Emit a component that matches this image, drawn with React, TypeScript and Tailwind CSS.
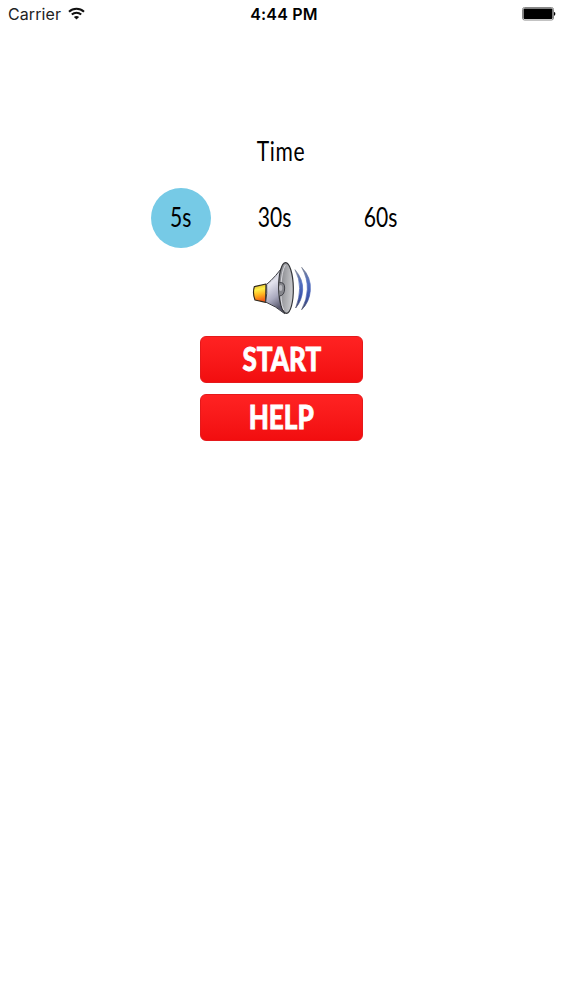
import React, { useState } from 'react';

const durations = [
    { seconds: 5, spacing: '' },
    { seconds: 30, spacing: 'ml-[34px]' },
    { seconds: 60, spacing: 'ml-[46px]' },
];

const WifiIcon: React.FC = () => (
    <svg className="w-[17px] h-[13px] ml-[7px] -mt-0.5" viewBox="0 0 17 13" fill="none" stroke="#111" strokeWidth="2">
        <path d="M1 4.7C5.2.7 11.8.7 16 4.7" />
        <path d="M3.8 7.6c2.7-2.5 6.700-2.500 9.400 0" />
        <path d="M8.500 12.500 5.900 9.900c1.500-1.300 3.700-1.300 5.200 0z" fill="#111" stroke="none" />
    </svg>
);

const BatteryIcon: React.FC = () => (
    <svg className="w-[34px] h-[14px]" viewBox="0 0 34 14">
        <rect x="0.500" y="0.500" width="31" height="12.500" rx="2" fill="#fff" stroke="#888" />
        <rect x="1.500" y="1.500" width="29" height="10.500" rx="1" fill="#000" />
        <path d="M32 5c1 .2 1.300.8 1.300 1.800s-.3 1.700-1.300 1.900z" fill="#000" />
    </svg>
);

const SpeakerIcon: React.FC = () => (
    <svg className="w-[84px] h-[72px]" viewBox="0 0 252 216">
        <defs>
            <linearGradient id="magnet" x1="0" y1="0" x2="0.15" y2="1">
                <stop offset="0" stopColor="#d9a927" />
                <stop offset="0.35" stopColor="#fff04a" />
                <stop offset="0.65" stopColor="#ffb31f" />
                <stop offset="1" stopColor="#ee5a16" />
            </linearGradient>
            <linearGradient id="horn" x1="0" y1="0" x2="0.3" y2="1">
                <stop offset="0" stopColor="#8a8b92" />
                <stop offset="0.45" stopColor="#e4e4ef" />
                <stop offset="0.75" stopColor="#a9a9be" />
                <stop offset="1" stopColor="#55556a" />
            </linearGradient>
            <linearGradient id="cone" x1="0" y1="0" x2="1" y2="0.3">
                <stop offset="0" stopColor="#77787d" />
                <stop offset="0.55" stopColor="#a5a6aa" />
                <stop offset="1" stopColor="#c8c9cc" />
            </linearGradient>
            <linearGradient id="wave" x1="0" y1="0" x2="0" y2="1">
                <stop offset="0" stopColor="#777d8d" />
                <stop offset="0.35" stopColor="#526fc0" />
                <stop offset="0.7" stopColor="#3c54ac" />
                <stop offset="1" stopColor="#444a62" />
            </linearGradient>
        </defs>
        <path d="M43 104 78 96 77 151 45 144Q37 124 43 104Z" fill="url(#magnet)" stroke="#30281b" strokeWidth="3.500" strokeLinejoin="round" />
        <path d="M80 97Q105 77 137 32L134 185Q108 163 77 150Q82 124 80 97Z" fill="url(#horn)" stroke="#3c3d43" strokeWidth="3" strokeLinejoin="round" />
        <ellipse cx="138" cy="108" rx="22" ry="76" fill="url(#cone)" stroke="#333438" strokeWidth="3.500" transform="rotate(-1 138 108)" />
        <path d="M136 39C121 61 117 146 131 174" fill="none" stroke="#d9d9df" strokeWidth="3" />
        <path d="M118 92Q134 89 134 108Q134 131 118 132Z" fill="#85868c" />
        <path d="M118 92Q134 89 134 108Q134 131 118 132" fill="none" stroke="#404148" strokeWidth="3" />
        <ellipse cx="122" cy="108" rx="5" ry="9" fill="#b8b8be" />
        <path d="M165 53Q190 82 188 114Q186 146 167 168Q179 137 179 109Q179 80 165 53Z" fill="url(#wave)" stroke="url(#wave)" strokeWidth="2" />
        <path d="M185 46Q215 77 211 116Q208 151 185 173Q201 143 202 112Q203 79 185 46Z" fill="url(#wave)" stroke="url(#wave)" strokeWidth="2" />
    </svg>
);

const ActionButton: React.FC<{ label: string }> = ({ label }) => (
    <button className="w-[163px] h-[47px] pb-[3px] flex items-center justify-center rounded-md bg-linear-to-b from-[#ff2222] to-[#f20d0f] border border-[#e5191b] text-white font-['Lato',sans-serif] font-black text-[33px] leading-none [-webkit-text-stroke:0.8px_white]">
        <span className="scale-x-[0.79]">{label}</span>
    </button>
);

const App: React.FC = () => {
    const [selected, setSelected] = useState<number>(5);

    return (
        <div className="w-full min-h-screen bg-white text-black">
            <header className="h-7 grid grid-cols-3 items-center pl-2 pr-[7px] font-['Inter',sans-serif] text-base leading-7">
                <div className="flex items-center">
                    <span className="text-[#222] tracking-[0.1px]">Carrier</span>
                    <WifiIcon />
                </div>
                <span className="text-center font-semibold tracking-[0.2px] whitespace-nowrap ml-1">4:44 PM</span>
                <div className="flex justify-end"><BatteryIcon /></div>
            </header>
            <main className="flex flex-col items-center pt-[103px]">
                <h1 className="h-10 flex items-center -ml-[1px] font-['Lato',sans-serif] text-[27px] tracking-[0.8px]">
                    <span className="scale-x-[0.78]">Time</span>
                </h1>
                <div className="flex mt-[17px] -ml-[1px]">
                    {durations.map(({ seconds, spacing }) => (
                        <button
                            key={seconds}
                            onClick={() => setSelected(seconds)}
                            className={`w-[60px] h-[60px] pb-0.5 flex items-center justify-center rounded-full font-['Lato',sans-serif] text-[27px] ${spacing} ${selected === seconds ? 'bg-[#76cae6]' : ''}`}
                        >
                            <span className="scale-x-[0.78]">{seconds}s</span>
                        </button>
                    ))}
                </div>
                <button aria-label="Sound" className="mt-1">
                    <SpeakerIcon />
                </button>
                <div className="flex flex-col gap-[11px] mt-3">
                    <ActionButton label="START" />
                    <ActionButton label="HELP" />
                </div>
            </main>
        </div>
    );
};

export default App;
